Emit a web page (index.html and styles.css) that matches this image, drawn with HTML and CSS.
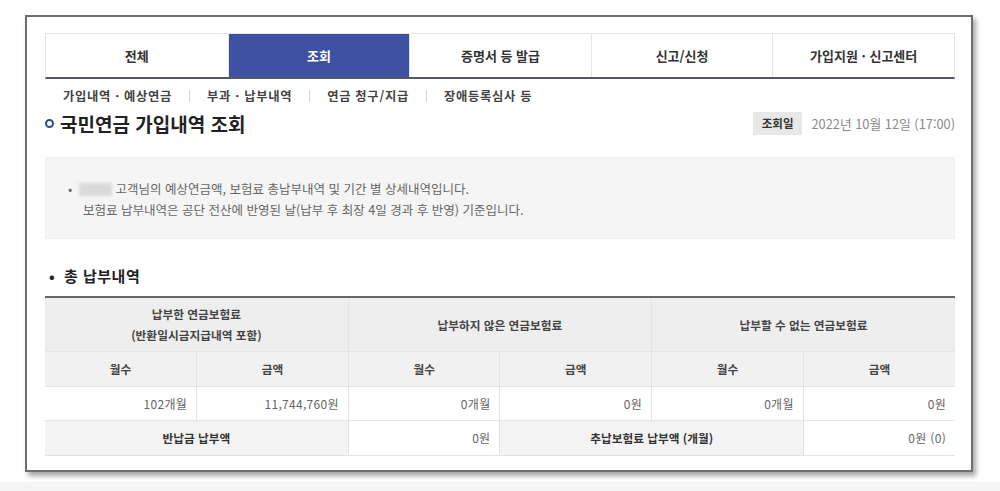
FILE: index.html
```html
<!DOCTYPE html>
<html lang="ko">
<head>
<meta charset="utf-8">
<title>국민연금 가입내역 조회</title>
<link rel="stylesheet" href="styles.css">
</head>
<body>
<div class="frame">
  <nav class="tabs">
    <div class="tab">전체</div>
    <div class="tab active">조회</div>
    <div class="tab">증명서 등 발급</div>
    <div class="tab">신고/신청</div>
    <div class="tab">가입지원 · 신고센터</div>
  </nav>
  <div class="subnav">
    <span class="sub">가입내역 · 예상연금</span>
    <span class="sub">부과 · 납부내역</span>
    <span class="sub">연금 청구/지급</span>
    <span class="sub">장애등록심사 등</span>
  </div>
  <div class="titlerow">
    <h1 class="title"><span class="ring"></span>국민연금 가입내역 조회</h1>
    <div class="date"><span class="badge">조회일</span><span class="when">2022년 10월 12일 (17:00)</span></div>
  </div>
  <div class="info">
    <p><span class="dot">•</span><span class="name"></span> 고객님의 예상연금액, 보험료 총납부내역 및 기간 별 상세내역입니다.<br>보험료 납부내역은 공단 전산에 반영된 날(납부 후 최장 4일 경과 후 반영) 기준입니다.</p>
  </div>
  <h2 class="sec"><span class="sdot">•</span>총 납부내역</h2>
  <table class="tbl">
    <tr class="r1">
      <th colspan="2">납부한 연금보험료<br>(반환일시금지급내역 포함)</th>
      <th colspan="2">납부하지 않은 연금보험료</th>
      <th colspan="2">납부할 수 없는 연금보험료</th>
    </tr>
    <tr class="r2">
      <th>월수</th><th>금액</th><th>월수</th><th>금액</th><th>월수</th><th>금액</th>
    </tr>
    <tr class="r3">
      <td>102개월</td><td>11,744,760원</td><td>0개월</td><td>0원</td><td>0개월</td><td>0원</td>
    </tr>
    <tr class="r4">
      <td colspan="2" class="lbl">반납금 납부액</td>
      <td>0원</td>
      <td colspan="2" class="lbl">추납보험료 납부액 (개월)</td>
      <td>0원 (0)</td>
    </tr>
  </table>
</div>
<div class="band"></div>
</body>
</html>
```

FILE: styles.css
```css
html, body {
  margin: 0;
  padding: 0;
  background: #ffffff;
}
body {
  width: 1000px;
  height: 491px;
  overflow: hidden;
  padding-top: 15px;
  box-sizing: border-box;
  font-family: "Noto Sans CJK KR", "Noto Sans", sans-serif;
  color: #333;
}
.frame {
  margin-left: 25px;
  width: 948px;
  box-sizing: border-box;
  border: 2px solid #6e6e6e;
  padding: 16px 16px 14px 18px;
  background: #fff;
  box-shadow: 3px 4px 5px rgba(0, 0, 0, 0.35);
}
.band {
  margin-top: 10px;
  height: 12px;
  background: #f5f5f5;
}
.tabs {
  display: grid;
  grid-template-columns: repeat(5, 1fr);
  height: 46px;
  box-sizing: border-box;
  border: 1px solid #e6e6e6;
  border-bottom: 2px solid #545866;
}
.tab {
  display: flex;
  align-items: center;
  justify-content: center;
  font-size: 13px;
  font-weight: 700;
  color: #333;
  border-left: 1px solid #e6e6e6;
}
.tab:first-child { border-left: none; }
.tab.active {
  background: #3e50a2;
  color: #fff;
}
.subnav {
  display: flex;
  align-items: center;
  margin-top: 9px;
  height: 16px;
  font-size: 12.3px;
  letter-spacing: 0.7px;
  font-weight: 700;
  color: #444;
}
.sub {
  padding: 0 17px;
  line-height: 12px;
  border-left: 1px solid #d6d6d6;
}
.sub:first-child {
  border-left: none;
  padding-left: 18px;
}
.titlerow {
  margin-top: 8px;
  height: 23px;
  display: flex;
  align-items: center;
  justify-content: space-between;
}
.title {
  margin: 0;
  display: flex;
  align-items: center;
  gap: 6px;
  font-size: 19px;
  font-weight: 700;
  color: #222;
  letter-spacing: 0;
}
.ring {
  width: 9px;
  height: 9px;
  box-sizing: border-box;
  border: 2.5px solid #2c4a8e;
  border-radius: 50%;
}
.date {
  display: flex;
  align-items: center;
  height: 23px;
}
.badge {
  height: 23px;
  line-height: 23px;
  padding: 0 9px;
  background: #e8e8e8;
  font-size: 11.5px;
  font-weight: 700;
  color: #333;
}
.when {
  margin-left: 9px;
  font-size: 12.8px;
  color: #8a8a8a;
}
.info {
  margin-top: 22px;
  height: 82px;
  box-sizing: border-box;
  background: #f5f5f5;
  border: 1px solid #eeeeee;
  padding: 20px 0 0 37px;
}
.info p {
  margin: 0;
  font-size: 12.5px;
  line-height: 21px;
  color: #666;
  text-indent: -15px;
}
.dot {
  display: inline-block;
  width: 11px;
  text-indent: 0;
}
.name {
  display: inline-block;
  width: 33px;
  height: 13px;
  vertical-align: -2px;
  background: #dadada;
  filter: blur(1.5px);
}
.sec {
  margin: 27px 0 0;
  height: 20px;
  line-height: 20px;
  font-size: 15px;
  letter-spacing: 0.5px;
  font-weight: 700;
  color: #222;
}
.sdot {
  display: inline-block;
  box-sizing: content-box;
  width: 15px;
  padding-left: 4px;
  letter-spacing: 0;
}
.tbl {
  margin-top: 10px;
  width: 910px;
  border-collapse: collapse;
  table-layout: fixed;
  border-top: 2px solid #666;
  border-bottom: 1px solid #e2e2e2;
  font-size: 11.7px;
}
.tbl th, .tbl td {
  border-left: 1px solid #e3e3e3;
  border-top: 1px solid #e6e6e6;
  padding: 0;
}
.tbl tr > :first-child { border-left: none; }
.tbl th {
  font-weight: 700;
  color: #444;
  text-align: center;
}
.r1 { height: 54px; }
.r1 th {
  background: #eeeeee;
  line-height: 21px;
  border-top: none;
}
.r2 { height: 35px; }
.r2 th { background: #f1f1f1; }
.r3 { height: 34px; }
.r4 { height: 35px; }
.tbl td {
  text-align: right;
  padding-right: 9px;
  color: #666;
  background: #fff;
  font-size: 12px;
  letter-spacing: 0.3px;
}
.tbl td.lbl {
  text-align: center;
  padding-right: 0;
  background: #f3f3f3;
  color: #333;
  font-weight: 700;
  font-size: 11.7px;
  letter-spacing: 0;
}
```
